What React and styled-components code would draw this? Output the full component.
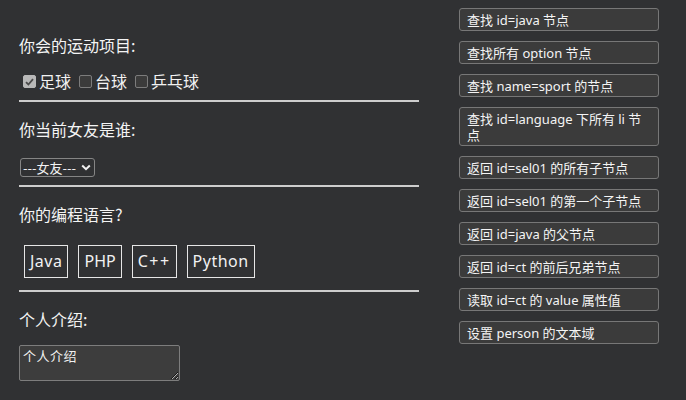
import React from "react";
import styled, { createGlobalStyle } from "styled-components";

const Global = createGlobalStyle`
  html, body { margin: 0; padding: 0; background: #303133; }
  body {
    font-family: "Noto Sans", "Noto Sans CJK SC", sans-serif;
    color: #f2f2f2;
  }
  * { box-sizing: border-box; }
`;

const Page = styled.div`
  display: flex;
  align-items: flex-start;
  padding-left: 19px;
  width: 686px;
  height: 400px;
  overflow: hidden;
`;

const Total = styled.div`
  width: 400px;
  margin-top: 18px;
  display: flex;
  flex-direction: column;
`;

const Section = styled.div`
  display: flex;
  flex-direction: column;
  align-items: flex-start;
  padding-top: 17px;
  padding-bottom: ${(p) => p.$pb}px;
  border-bottom: ${(p) => (p.$last ? "none" : "2px solid #cdcdcd")};
`;

const Heading = styled.p`
  margin: 0 0 15px;
  font-size: 16px;
  line-height: 21px;
  font-family: "Noto Sans CJK SC", sans-serif;
  color: #f4f4f4;
`;

const CheckRow = styled.div`
  display: flex;
  align-items: center;
  height: 21px;
  gap: 4px;
`;

const CheckLabel = styled.label`
  display: flex;
  align-items: center;
  font-size: 16px;
  line-height: 21px;
  font-family: "Noto Sans CJK SC", sans-serif;
`;

const Box = styled.span`
  width: 13px;
  height: 13px;
  margin: 0 3px 0 4px;
  border-radius: 2px;
  border: 1px solid ${(p) => (p.$checked ? "#b8b8b8" : "#7c7c7c")};
  background: ${(p) => (p.$checked ? "#b8b8b8" : "#3b3b3b")};
  display: flex;
  align-items: center;
  justify-content: center;
`;

const SelectBox = styled.div`
  margin-top: 3px;
  margin-left: 1px;
  width: 75px;
  height: 19px;
  border: 1px solid #858585;
  border-radius: 3px;
  background: #303133;
  display: flex;
  align-items: center;
  justify-content: space-between;
  padding: 0 3px 0 2px;
  font-size: 13px;
  font-family: "Noto Sans CJK SC", sans-serif;
  color: #f2f2f2;
`;

const LangList = styled.ul`
  list-style: none;
  margin: 0;
  padding: 0;
  display: flex;
`;

const LangItem = styled.li`
  margin: 5px;
  padding: 5px;
  border: 1px solid #e6e6e6;
  font-size: 16px;
  line-height: 21px;
  letter-spacing: ${(p) => p.$ls}px;
`;

const TextArea = styled.textarea`
  display: block;
  width: 161px;
  height: 36px;
  margin: 0;
  padding: 2px 3px;
  border: 1px solid #7d7d7d;
  border-radius: 2px;
  background: #3d3d3d;
  color: #f2f2f2;
  font-size: 13px;
  line-height: 16px;
  letter-spacing: 0.5px;
  font-family: "Noto Sans CJK SC", sans-serif;
  color-scheme: dark;
  outline: none;
`;

const BtnList = styled.div`
  margin-left: 40px;
  margin-top: 8px;
  width: 200px;
  display: flex;
  flex-direction: column;
  gap: 10px;
`;

const Btn = styled.button`
  width: 200px;
  padding: 2.5px 7px;
  border: 1px solid #777;
  border-radius: 3px;
  background: #3b3b3b;
  color: #f4f4f4;
  font-size: 13px;
  line-height: 16px;
  text-align: left;
  font-family: "Noto Sans", "Noto Sans CJK SC", sans-serif;
  cursor: pointer;
`;

const Check = () => (
  <svg width="9" height="8" viewBox="0 0 9 8">
    <path d="M1 4.2 L3.4 6.5 L8 1.2" stroke="#4a4a4a" strokeWidth="1.8" fill="none" />
  </svg>
);

const Chevron = () => (
  <svg width="10" height="7" viewBox="0 0 10 7">
    <path d="M1.2 1.5 L5 5.2 L8.8 1.5" stroke="#f2f2f2" strokeWidth="2" fill="none" />
  </svg>
);

const buttons = [
  "查找 id=java 节点",
  "查找所有 option 节点",
  "查找 name=sport 的节点",
  "查找 id=language 下所有 li 节点",
  "返回 id=sel01 的所有子节点",
  "返回 id=sel01 的第一个子节点",
  "返回 id=java 的父节点",
  "返回 id=ct 的前后兄弟节点",
  "读取 id=ct 的 value 属性值",
  "设置 person 的文本域",
];

const sports = [
  { name: "足球", checked: true },
  { name: "台球", checked: false },
  { name: "乒乓球", checked: false },
];

const langs = [
  { name: "Java", ls: 0.5 },
  { name: "PHP", ls: 0 },
  { name: "C++", ls: 1.5 },
  { name: "Python", ls: 0.5 },
];

export default function App() {
  return (
    <>
      <Global />
      <Page>
        <Total>
          <Section $pb={8}>
            <Heading>你会的运动项目:</Heading>
            <CheckRow>
              {sports.map((s) => (
                <CheckLabel key={s.name}>
                  <Box $checked={s.checked}>{s.checked && <Check />}</Box>
                  {s.name}
                </CheckLabel>
              ))}
            </CheckRow>
          </Section>
          <Section $pb={8}>
            <Heading>你当前女友是谁:</Heading>
            <SelectBox>
              <span>---女友---</span>
              <Chevron />
            </SelectBox>
          </Section>
          <Section $pb={7}>
            <Heading>你的编程语言?</Heading>
            <LangList>
              {langs.map((l) => (
                <LangItem key={l.name} $ls={l.ls}>
                  {l.name}
                </LangItem>
              ))}
            </LangList>
          </Section>
          <Section $pb={0} $last>
            <Heading>个人介绍:</Heading>
            <TextArea defaultValue="个人介绍" />
          </Section>
        </Total>
        <BtnList>
          {buttons.map((b) => (
            <Btn key={b}>{b}</Btn>
          ))}
        </BtnList>
      </Page>
    </>
  );
}
